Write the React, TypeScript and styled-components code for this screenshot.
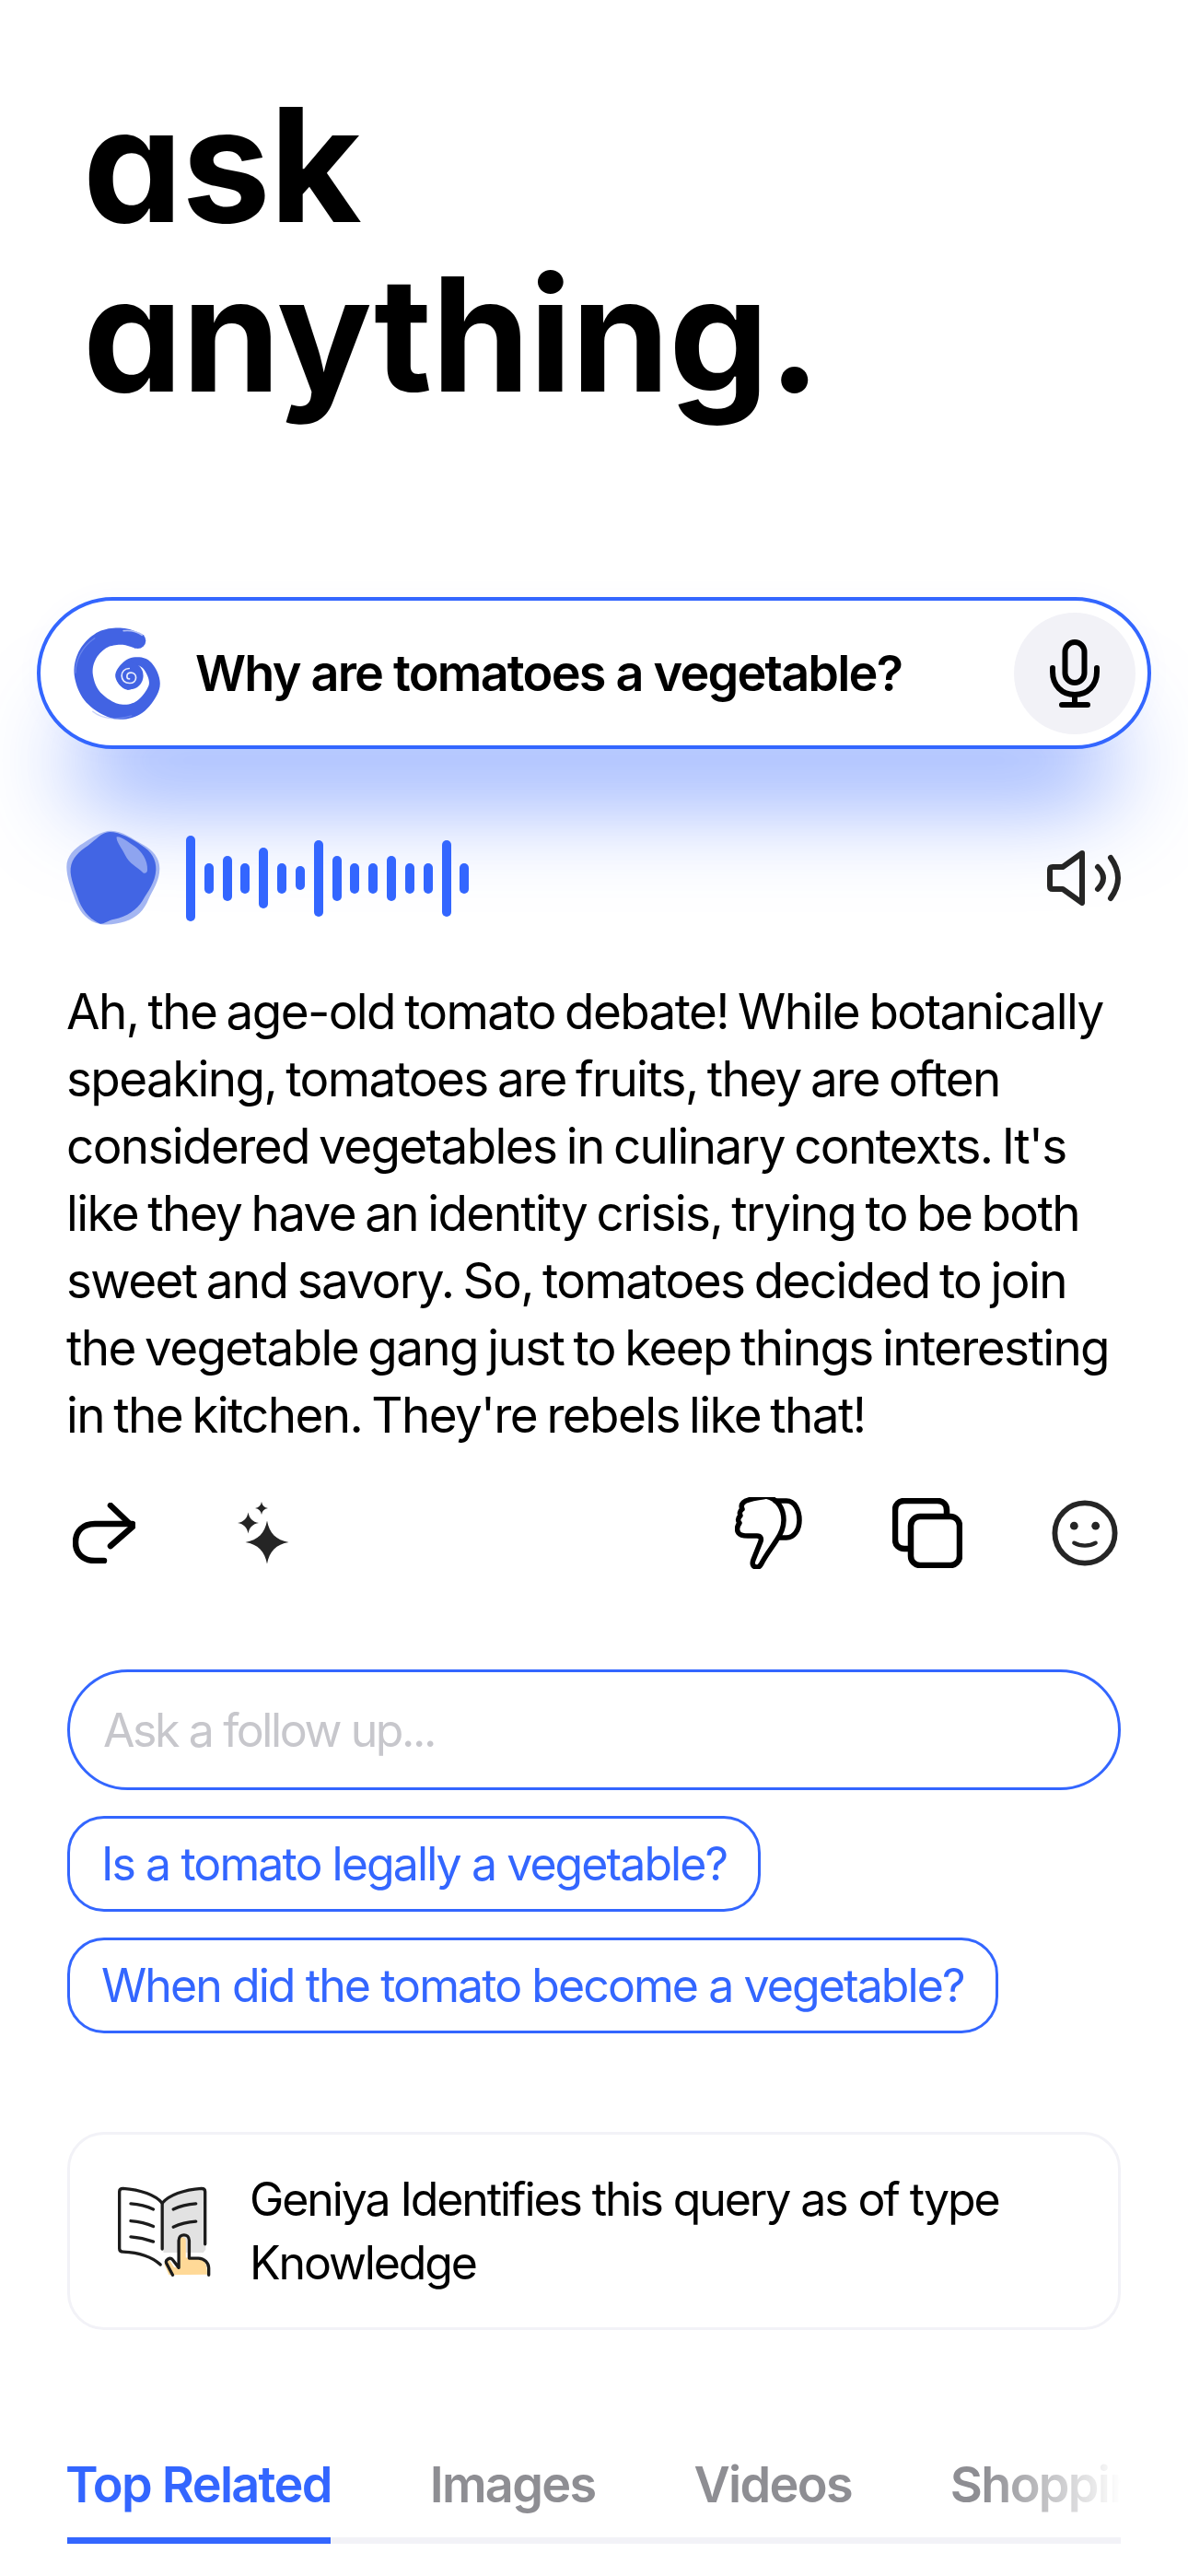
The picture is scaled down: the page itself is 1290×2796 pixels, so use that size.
import React from "react";
import styled, { createGlobalStyle } from "styled-components";

const Global = createGlobalStyle`
  html, body { margin: 0; padding: 0; background: #fff; }
  body { font-family: "Inter", "Liberation Sans", sans-serif; color: #000; }
`;

const Page = styled.div`
  width: 1290px;
  height: 2796px;
  overflow: hidden;
  background: #fff;
  display: flex;
  flex-direction: column;
`;

const Title = styled.h1`
  margin: 0;
  padding: 86px 0 0 90px;
  height: 648px;
  box-sizing: border-box;
  font-family: "Inter", sans-serif;
  font-feature-settings: "cv11" 1;
  font-weight: 650;
  font-size: 172px;
  line-height: 184px;
  letter-spacing: -1px;
  color: #000;
`;

const SearchBar = styled.div`
  margin: 0 40px;
  height: 165px;
  box-sizing: border-box;
  border: 4px solid #3366ff;
  border-radius: 83px;
  background: #fff;
  box-shadow: 0 95px 100px -38px rgba(51, 102, 255, 0.55), 0 0 30px rgba(51, 102, 255, 0.03);
  display: flex;
  align-items: center;
  padding: 0 13px 0 35px;
  position: relative;
  z-index: 1;
`;

const SearchText = styled.div`
  flex: 1;
  margin-left: 36px;
  font-weight: 600;
  font-size: 54px;
  letter-spacing: -1.8px;
  line-height: 64px;
`;

const MicButton = styled.div`
  width: 132px;
  height: 132px;
  border-radius: 50%;
  background: #f2f2f7;
  display: flex;
  align-items: center;
  justify-content: center;
`;

const Content = styled.div`
  padding: 0 73px;
  display: flex;
  flex-direction: column;
  position: relative;
  z-index: 2;
`;

const VoiceRow = styled.div`
  margin-top: 88px;
  height: 104px;
  display: flex;
  align-items: center;
`;

const BlobSlot = styled.div`
  margin-left: -1px;
  display: flex;
`;

const Wave = styled.div`
  margin-left: 28px;
  display: flex;
  align-items: center;
  gap: 9.83px;
  flex: 1;
`;

const WaveBar = styled.span<{ $h: number }>`
  width: 10px;
  height: ${(p) => p.$h}px;
  border-radius: 5px;
  background: #3366ff;
`;

const Answer = styled.p`
  margin: 57px 0 0 -1px;
  font-size: 53px;
  line-height: 73px;
  letter-spacing: -1.62px;
  word-spacing: -3px;
  white-space: nowrap;
`;

const ActionRow = styled.div`
  margin-top: 51px;
  height: 80px;
  display: flex;
  align-items: center;
  padding: 0 3px 0 6px;
`;

const ActionSlot = styled.div<{ $w: number }>`
  width: ${(p) => p.$w}px;
  display: flex;
`;

const Spacer = styled.div`
  flex: 1;
`;

const FollowUp = styled.div`
  margin-top: 108px;
  height: 131px;
  box-sizing: border-box;
  border: 3.5px solid #3366ff;
  border-radius: 66px;
  display: flex;
  align-items: center;
  padding-left: 36px;
  font-size: 50px;
  letter-spacing: -2.4px;
  color: #c7c7cc;
`;

const Chips = styled.div`
  margin-top: 28px;
  display: flex;
  flex-direction: column;
  align-items: flex-start;
  gap: 28px;
`;

const Chip = styled.div`
  height: 104px;
  box-sizing: border-box;
  border: 3.5px solid #3366ff;
  border-radius: 40px;
  padding: 0 34px;
  display: flex;
  align-items: center;
  font-size: 50px;
  letter-spacing: -1.92px;
  color: #3366ff;
`;

const InfoCard = styled.div`
  margin-top: 107px;
  height: 215px;
  box-sizing: border-box;
  border: 3px solid #f2f2f7;
  border-radius: 40px;
  display: flex;
  align-items: center;
  padding-left: 51px;
  gap: 41px;
`;

const InfoText = styled.div`
  font-size: 50px;
  line-height: 69px;
  letter-spacing: -2.1px;
`;

const Tabs = styled.div`
  margin-top: 136px;
  position: relative;
  border-bottom: 7px solid #f2f2f7;
`;

const TabList = styled.div`
  margin-left: -2px;
  display: flex;
  gap: 107px;
  overflow: hidden;
  height: 89px;
  white-space: nowrap;
  mask-image: linear-gradient(to right, #000 87%, transparent 100%);
`;

const Tab = styled.div<{ $active?: boolean }>`
  font-weight: 600;
  font-size: 54px;
  line-height: 64px;
  letter-spacing: -1.7px;
  color: ${(p) => (p.$active ? "#3366ff" : "#8e8e93")};
`;

const TabMarker = styled.div`
  position: absolute;
  left: 0;
  bottom: -7px;
  width: 286px;
  height: 7px;
  background: #3366ff;
`;

/* ---- drawings ---- */

type SP = [number, number, number];

function ribbon(points: SP[]): string {
  const sampled: SP[] = [];
  const at = (i: number) => points[Math.max(0, Math.min(points.length - 1, i))];
  for (let i = 0; i < points.length - 1; i++) {
    const [p0, p1, p2, p3] = [at(i - 1), at(i), at(i + 1), at(i + 2)];
    for (let s = 0; s < 10; s++) {
      const t = s / 10;
      const cr = (k: number) =>
        0.5 *
        (2 * p1[k] +
          (-p0[k] + p2[k]) * t +
          (2 * p0[k] - 5 * p1[k] + 4 * p2[k] - p3[k]) * t * t +
          (-p0[k] + 3 * p1[k] - 3 * p2[k] + p3[k]) * t * t * t);
      sampled.push([cr(0), cr(1), cr(2)]);
    }
  }
  sampled.push(points[points.length - 1]);
  const left: string[] = [];
  const right: string[] = [];
  sampled.forEach((p, i) => {
    const a = sampled[Math.max(0, i - 1)];
    const b = sampled[Math.min(sampled.length - 1, i + 1)];
    const dx = b[0] - a[0];
    const dy = b[1] - a[1];
    const l = Math.hypot(dx, dy) || 1;
    const nx = -dy / l;
    const ny = dx / l;
    left.push(`${(p[0] + (nx * p[2]) / 2).toFixed(1)} ${(p[1] + (ny * p[2]) / 2).toFixed(1)}`);
    right.unshift(`${(p[0] - (nx * p[2]) / 2).toFixed(1)} ${(p[1] - (ny * p[2]) / 2).toFixed(1)}`);
  });
  return "M" + left.concat(right).join("L") + "Z";
}

function star(cx: number, cy: number, r: number): string {
  const a = 0.1 * r;
  const b = 0.42 * r;
  return (
    `M${cx} ${cy - r}C${cx + a} ${cy - b} ${cx + b} ${cy - a} ${cx + r} ${cy}` +
    `C${cx + b} ${cy + a} ${cx + a} ${cy + b} ${cx} ${cy + r}` +
    `C${cx - a} ${cy + b} ${cx - b} ${cy + a} ${cx - r} ${cy}` +
    `C${cx - b} ${cy - a} ${cx - a} ${cy - b} ${cx} ${cy - r}Z`
  );
}

const spiral: SP[] = [
  [296, 136, 52],
  [245, 122, 54],
  [182, 133, 58],
  [134, 180, 60],
  [120, 245, 60],
  [150, 318, 56],
  [225, 365, 50],
  [300, 352, 42],
  [350, 282, 36],
  [325, 215, 32],
  [272, 205, 24],
  [236, 248, 26],
  [265, 285, 22],
  [300, 255, 18],
  [270, 230, 13],
  [250, 255, 9],
  [268, 270, 7],
  [281, 255, 5],
  [268, 246, 3],
];

const Logo = () => (
  <svg width="97" height="102" viewBox="85 90 290 305" fill="none">
    <path d={ribbon(spiral)} fill="#4263e3" />
    <circle cx="296" cy="136" r="26" fill="#4263e3" />
    <circle cx="270" cy="250" r="44" fill="#4263e3" />
    <path d="M268 226c-14 0-24 10-24 24s10 24 26 24c12 0 20-8 20-18s-7-16-16-16-13 6-13 12c0 5 4 8 8 8" stroke="#e9edfd" strokeWidth="5" strokeLinecap="round" />
    <path d="M250 104c22-2 44 2 60 14" stroke="#dfe6fd" strokeWidth="5" strokeLinecap="round" opacity=".7" />
    <path d="M94 240c0-40 20-84 62-112" stroke="#7f97f0" strokeWidth="4" strokeLinecap="round" opacity=".6" />
    <path d="M150 366c30 24 80 30 126 14" stroke="#8ea4f3" strokeWidth="4" strokeLinecap="round" opacity=".5" />
  </svg>
);

const Blob = () => (
  <svg width="102" height="104" viewBox="64 40 306 312" fill="none">
    <path
      d="M210 42C245 42 280 68 315 88C345 105 368 130 368 165C368 205 345 235 332 265C318 300 295 325 255 338C225 347 190 352 160 342C125 330 105 300 92 265C80 230 65 195 65 160C65 125 90 100 120 82C150 62 180 42 210 42Z"
      fill="#a4b6f2"
    />
    <path
      d="M205 46C240 46 280 70 310 90C340 108 358 135 356 170C354 210 330 240 312 270C294 298 262 322 220 330C200 334 188 345 175 345C150 335 120 310 105 270C95 240 75 195 78 165C82 130 105 110 135 90C160 72 180 46 205 46Z"
      fill="#4265e4"
    />
    <path
      d="M228 62C240 58 262 75 285 92C310 108 330 140 328 170C328 180 318 185 310 175C295 160 270 150 255 120C245 100 225 75 228 62Z"
      fill="#97abf1"
      opacity=".9"
    />
  </svg>
);

const Mic = () => (
  <svg width="54" height="74" viewBox="0 0 54 74" fill="none" stroke="#000" strokeLinecap="round" strokeLinejoin="round" strokeWidth="6">
    <rect x="16.500" y="3" width="21" height="44" rx="10.500" />
    <path d="M3 31v4c0 15 10 25 24 25s24-10 24-25v-4" />
    <path d="M27 60v11M13 71h28" />
  </svg>
);

const Speaker = () => (
  <svg width="80" height="60" viewBox="0 0 80 60" fill="none" stroke="#252525" strokeWidth="6" strokeLinecap="round" strokeLinejoin="round">
    <path d="M3 21v18c0 2 1 3 3 3h11l21 15V3L17 18H6c-2 0-3 1-3 3z" />
    <path d="M55 18c4 4 6 8 6 12s-2 8-6 12" />
    <path d="M69 8c5 7 8 14 8 22s-3 15-8 22" />
  </svg>
);

const Share = () => (
  <svg width="68" height="66" viewBox="0 0 68 66" fill="none" stroke="#000" strokeWidth="6.500" strokeLinecap="round" strokeLinejoin="round">
    <path d="M41 3l24 23-24 21" />
    <path d="M65 23H24C11 23 3 31 3 43s8 20 21 20h10" />
  </svg>
);

const Sparkles = () => (
  <svg width="56" height="68" viewBox="0 0 56 68" fill="#252525">
    <path d={star(32, 44, 23.500)} />
    <path d={star(11.500, 23, 11.500)} />
    <path d={star(26, 7, 7)} />
  </svg>
);

const Thumb = () => (
  <svg width="73" height="78" viewBox="0 0 73 78" fill="none" stroke="#000" strokeWidth="5.500" strokeLinecap="round" strokeLinejoin="round">
    <path d="M9 6c-2 2-2 5-1 7-3 2-3 5-2 7-3 3-3 6-1 8-3 4-3 8-1 11 2 3 6 3 10 3h10c4 0 5 3 4 6l-8 20c-2 5 0 8 4 8 3 0 4-2 6-6 5-9 10-15 15-23 5-7 8-14 8-22 0-12-6-23-19-26C27 1 14 1 9 6z" />
    <path d="M44 4h12c9 0 14 10 14 21 0 11-6 19-14 19h-8" />
  </svg>
);

const Copy = () => (
  <svg width="76" height="76" viewBox="0 0 76 76" fill="none" stroke="#000" strokeWidth="6.500" strokeLinejoin="round">
    <path d="M19 55h-6C7 55 3 51 3 45V13C3 7 7 3 13 3h36c6 0 10 4 10 10v7" />
    <rect x="20" y="20" width="53" height="53" rx="10" />
  </svg>
);

const Smile = () => (
  <svg width="72" height="72" viewBox="0 0 74 74" fill="none">
    <circle cx="37" cy="37" r="33.500" stroke="#252525" strokeWidth="6" />
    <circle cx="25" cy="29" r="4.500" fill="#252525" />
    <circle cx="49" cy="29" r="4.500" fill="#252525" />
    <path d="M25 48c7 4 17 4 24 0" stroke="#252525" strokeWidth="4.500" strokeLinecap="round" />
  </svg>
);

const Book = () => (
  <svg width="103" height="98" viewBox="80 95 310 295" fill="none">
    <path d="M232 150c22-25 80-46 130-48l8 10v190l-8 10H232z" fill="#e2e2e2" />
    <path d="M250 385l-15-35c0-8 10-18 18-12l14 22 12 0V272c0-14 26-14 26 0v56h40c25 2 30 30 30 55z" fill="#ffd997" />
    <g stroke="#1c1c1c" strokeWidth="10" strokeLinecap="round" strokeLinejoin="round">
      <path d="M228 150c-22-26-70-44-128-48-8 0-12 4-12 10v186c0 8 4 11 12 11 48 2 92 14 122 42" />
      <path d="M228 150c22-26 70-44 128-48 8 0 12 4 12 10v172" />
      <path d="M228 150v150" />
      <path d="M125 152c26 2 52 8 74 18M125 208c26 2 52 8 74 18M125 260c26 2 52 8 74 16" />
      <path d="M264 170c22-10 48-16 74-18M264 228c22-10 48-16 74-18" />
      <path d="M262 385l-20-38c-6-12 12-22 20-12l20 26V272c0-24 34-24 34 0v58h30c20 0 34 16 34 32v23" />
    </g>
  </svg>
);

const waveHeights = [93, 33, 49, 33, 66, 33, 26, 83, 49, 33, 33, 49, 33, 33, 83, 33];

export default function App() {
  return (
    <Page>
      <Global />
      <Title>
        ask
        <br />
        anything.
      </Title>
      <SearchBar>
        <Logo />
        <SearchText>Why are tomatoes a vegetable?</SearchText>
        <MicButton>
          <Mic />
        </MicButton>
      </SearchBar>
      <Content>
        <VoiceRow>
          <BlobSlot>
            <Blob />
          </BlobSlot>
          <Wave>
            {waveHeights.map((h, i) => (
              <WaveBar key={i} $h={h} />
            ))}
          </Wave>
          <Speaker />
        </VoiceRow>
        <Answer>
          Ah, the age-old tomato debate! While botanically
          <br />
          speaking, tomatoes are fruits, they are often
          <br />
          considered vegetables in culinary contexts. It's
          <br />
          like they have an identity crisis, trying to be both
          <br />
          sweet and savory. So, tomatoes decided to join
          <br />
          the vegetable gang just to keep things interesting
          <br />
          in the kitchen. They're rebels like that!
        </Answer>
        <ActionRow>
          <ActionSlot $w={179}>
            <Share />
          </ActionSlot>
          <Sparkles />
          <Spacer />
          <ActionSlot $w={171}>
            <Thumb />
          </ActionSlot>
          <ActionSlot $w={173}>
            <Copy />
          </ActionSlot>
          <Smile />
        </ActionRow>
        <FollowUp>Ask a follow up...</FollowUp>
        <Chips>
          <Chip>Is a tomato legally a vegetable?</Chip>
          <Chip>When did the tomato become a vegetable?</Chip>
        </Chips>
        <InfoCard>
          <Book />
          <InfoText>
            Geniya Identifies this query as of type
            <br />
            Knowledge
          </InfoText>
        </InfoCard>
        <Tabs>
          <TabList>
            <Tab $active>Top Related</Tab>
            <Tab>Images</Tab>
            <Tab>Videos</Tab>
            <Tab>Shopping</Tab>
          </TabList>
          <TabMarker />
        </Tabs>
      </Content>
    </Page>
  );
}
